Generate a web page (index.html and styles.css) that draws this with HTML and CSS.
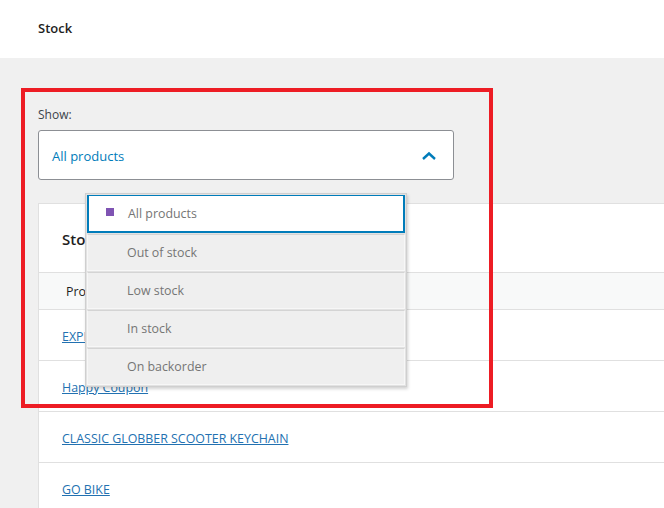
FILE: index.html
```html
<!DOCTYPE html>
<html lang="en">
<head>
    <meta charset="UTF-8">
    <title>Stock</title>
    <link rel="stylesheet" href="styles.css">
</head>
<body>
	<div class="top-bar">
		<h1>Stock</h1>
	</div>
	<div class="content">
		<div class="filter">
			<label>Show:</label>
			<div class="select-wrap">
				<div class="select">
					<span>All products</span>
					<svg class="chevron" width="16" height="10" viewBox="0 0 16 10"><path d="M2 8 L8 2.5 L14 8" fill="none" stroke="#007cba" stroke-width="2.4"/></svg>
				</div>
				<ul class="options">
					<li class="active"><i></i>All products</li>
					<li>Out of stock</li>
					<li>Low stock</li>
					<li>In stock</li>
					<li>On backorder</li>
				</ul>
			</div>
		</div>
		<div class="card">
			<h2>Stock</h2>
			<div class="thead">Product / Variation</div>
			<div class="row"><a href="#">EXPRESS DELIVERY BOX</a></div>
			<div class="row"><a href="#">Happy Coupon</a></div>
			<div class="row"><a href="#">CLASSIC GLOBBER SCOOTER KEYCHAIN</a></div>
			<div class="row"><a href="#">GO BIKE</a></div>
		</div>
	</div>
	<div class="highlight"></div>
</body>
</html>
```

FILE: styles.css
```css
	html, body {
		margin: 0;
		height: 100%;
		overflow: hidden;
	}
	body {
		background: #f0f0f0;
		font-family: "Open Sans", "Noto Sans", sans-serif;
		font-size: 12px;
		color: #1e1e1e;
		position: relative;
	}
	.top-bar {
		height: 58px;
		background: #fff;
		padding-left: 38px;
		box-sizing: border-box;
	}
	.top-bar h1 {
		margin: 0;
		font-size: 13px;
		font-weight: 600;
		line-height: 56px;
	}
	.content {
		padding: 49px 0 0 38px;
	}
	.filter label {
		display: block;
		font-size: 12px;
		color: #3c434a;
		line-height: 16px;
		margin-bottom: 7px;
	}
	.select-wrap {
		position: relative;
		width: 416px;
	}
	.select {
		height: 50px;
		box-sizing: border-box;
		border: 1px solid #8c8f94;
		border-radius: 3px;
		background: #fff;
		display: flex;
		align-items: center;
		justify-content: space-between;
		padding: 2px 16px 0 13px;
		color: #007cba;
		font-size: 13px;
	}
	.chevron {
		display: block;
	}
	.options {
		position: absolute;
		left: 47px;
		top: 63px;
		width: 322px;
		margin: 0;
		padding: 1px;
		list-style: none;
		box-sizing: border-box;
		background: #e2e2e2;
		border: 1px solid #cfcfcf;
		box-shadow: 1px 2px 3px rgba(0, 0, 0, 0.18);
		z-index: 2;
	}
	.options li {
		height: 37px;
		box-sizing: border-box;
		padding-left: 39px;
		display: flex;
		align-items: center;
		background: #efefef;
		border: 1px solid #f7f7f7;
		border-top-color: #d4d4d4;
		color: #757575;
		font-size: 12.4px;
		margin-top: 1px;
	}
	.options li:first-child {
		margin-top: 0;
	}
	.options li.active {
		background: #fff;
		border: 2px solid #007cba;
		border-top-width: 1px;
		height: 38px;
		padding-left: 37px;
	}
	.options li i {
		width: 8px;
		height: 8px;
		background: #7f54b3;
		margin: -3px 14px 0 -20px;
	}
	.card {
		margin-top: 23px;
		background: #fff;
		border-top: 1px solid #e0e0e0;
		border-left: 1px solid #e0e0e0;
	}
	.card h2 {
		margin: 0;
		height: 68px;
		line-height: 70px;
		padding-left: 23px;
		font-size: 15px;
		font-weight: 600;
		border-bottom: 1px solid #e0e0e0;
	}
	.thead {
		height: 36px;
		line-height: 37px;
		padding-left: 27px;
		background: #f8f9f9;
		font-size: 12.4px;
		border-bottom: 1px solid #e0e0e0;
	}
	.row {
		height: 51px;
		line-height: 53px;
		padding-left: 23px;
		border-bottom: 1px solid #e0e0e0;
		box-sizing: border-box;
	}
	.row a {
		color: #2271b1;
		font-size: 12.4px;
	}
	.highlight {
		position: absolute;
		left: 21px;
		top: 88px;
		width: 472px;
		height: 320px;
		box-sizing: border-box;
		border: 4px solid #ed1c24;
		z-index: 3;
	}
```
